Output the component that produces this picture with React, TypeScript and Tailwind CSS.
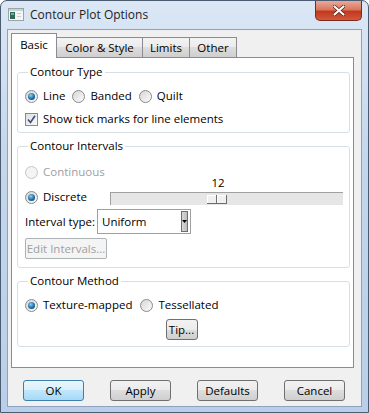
import React from 'react';

const ui = "font-['Open_Sans',sans-serif] text-[11.5px] leading-[16px] text-black";

function Radio({ checked, disabled }: { checked?: boolean; disabled?: boolean }) {
    return (
        <span
            className={`w-[13px] h-[13px] rounded-full border flex items-center justify-center shrink-0 ${disabled ? 'border-[#c5c5c5] bg-[#f4f4f4]' : 'border-[#8a8a8a] bg-gradient-to-br from-[#d6d6d6] to-[#fcfcfc]'}`}
        >
            {checked && (
                <span className="w-[7px] h-[7px] rounded-full bg-[radial-gradient(circle_at_40%_35%,#8fd0f2,#1d6da6_55%,#0c3a5e)]" />
            )}
        </span>
    );
}

function Check() {
    return (
        <span className="w-[13px] h-[13px] border border-[#8a8a8a] bg-gradient-to-br from-[#dedede] to-[#fbfbfb] flex items-center justify-center shrink-0">
            <svg width="9" height="9" viewBox="0 0 9 9">
                <path d="M1 4.5 L3.5 7.5 L8 0.8" fill="none" stroke="#3c4e7c" strokeWidth="1.6" />
            </svg>
        </span>
    );
}

function Button({ label, primary, className = '' }: { label: string; primary?: boolean; className?: string }) {
    return (
        <div
            className={`h-[21px] rounded-[3px] border flex items-center justify-center ${primary ? 'border-[#3c7fb1] bg-[linear-gradient(#eaf6fd,#d9f0fc_50%,#bee6fd_50%,#a7d9f5)]' : 'border-[#707070] bg-[linear-gradient(#f2f2f2,#ebebeb_50%,#dddddd_50%,#cfcfcf)]'} ${className}`}
        >
            {label}
        </div>
    );
}

function Group({ title, className = '', children }: { title: string; className?: string; children: React.ReactNode }) {
    return (
        <fieldset className={`border border-[#d5dfe5] rounded-[3px] ml-[5px] mr-[3px] px-[7px] ${className}`}>
            <legend className="ml-[3px] px-[2px] leading-[16px]">{title}</legend>
            {children}
        </fieldset>
    );
}

export default function App() {
    return (
        <div className={`w-[369px] h-[413px] flex flex-col border border-[#4b5b70] rounded-t-[7px] overflow-hidden bg-[linear-gradient(#dbe7f5,#c3d6ec_40%,#b9cfe9)] ${ui}`}>
            {/* title bar */}
            <div className="h-[28px] flex items-start shrink-0">
                <div className="flex items-center h-[27px] pl-[7px] gap-[6px]">
                    <svg width="16" height="13" viewBox="0 0 16 13">
                        <rect x="0.5" y="0.5" width="15" height="12" fill="#f4f6f7" stroke="#9aa3a6" />
                        <rect x="1" y="1" width="14" height="2" fill="#c9d3d6" />
                        <rect x="2" y="4" width="5" height="7" fill="#2f6a58" />
                        <rect x="3" y="5" width="3" height="2" fill="#6fb09a" />
                        <rect x="9" y="5" width="4" height="1" fill="#c8cdd0" />
                        <rect x="9" y="8" width="4" height="1" fill="#c8cdd0" />
                    </svg>
                    <span className="text-[12px] text-[#1e1e1e]">Contour Plot Options</span>
                </div>
                <div className="ml-auto mr-[6px] w-[47px] h-[20px] rounded-b-[5px] border border-t-0 border-[#7d2a1f] bg-[linear-gradient(#e9a99c,#d9785f_45%,#c2391f_55%,#d0583c)] flex items-center justify-center">
                    <svg width="12" height="11" viewBox="0 0 12 11">
                        <path d="M1.5 1.5 L10.5 9.5 M10.5 1.5 L1.5 9.5" stroke="#5a1a10" strokeWidth="3.6" strokeLinecap="round" />
                        <path d="M1.5 1.5 L10.5 9.5 M10.5 1.5 L1.5 9.5" stroke="#ffffff" strokeWidth="2.2" strokeLinecap="round" />
                    </svg>
                </div>
            </div>

            {/* client */}
            <div className="mx-[6px] mb-[5px] flex-1 border border-[#8ea2bd] bg-[#f0f0f0] flex flex-col pl-[3px] pr-[6px] pt-[3px]">
                {/* tabs */}
                <div className="h-[24px] flex items-end relative z-10">
                    <div className="w-[46px] h-[25px] -mb-px bg-white border border-b-0 border-[#898c95] flex items-center justify-center pb-[2px]">Basic</div>
                    <div className="w-[87px] -ml-px h-[20px] border border-b-0 border-[#898c95] bg-[linear-gradient(#f3f3f3,#ebebeb_50%,#dddddd_50%,#cfcfcf)] flex items-center justify-center">Color &amp; Style</div>
                    <div className="w-[48px] -ml-px h-[20px] border border-b-0 border-[#898c95] bg-[linear-gradient(#f3f3f3,#ebebeb_50%,#dddddd_50%,#cfcfcf)] flex items-center justify-center">Limits</div>
                    <div className="w-[48px] -ml-px h-[20px] border border-b-0 border-[#898c95] bg-[linear-gradient(#f3f3f3,#ebebeb_50%,#dddddd_50%,#cfcfcf)] flex items-center justify-center">Other</div>
                </div>

                {/* tab page */}
                <div className="w-[343px] h-[311px] border border-[#898c95] bg-white flex flex-col pt-[6px]">
                    <Group title="Contour Type" className="pt-[6px] pb-[3px]">
                        <div className="h-[20px] flex items-center">
                            <Radio checked />
                            <span className="ml-[5px] mr-[7px]">Line</span>
                            <Radio />
                            <span className="ml-[5px] mr-[7px]">Banded</span>
                            <Radio />
                            <span className="ml-[5px]">Quilt</span>
                        </div>
                        <div className="h-[20px] mt-[3px] flex items-center">
                            <Check />
                            <span className="ml-[5px]">Show tick marks for line elements</span>
                        </div>
                    </Group>

                    <Group title="Contour Intervals" className="mt-[5px] pt-[8px] pb-[8px]">
                        <div className="h-[20px] flex items-center">
                            <Radio disabled />
                            <span className="ml-[5px] text-[#a0a0a0]">Continuous</span>
                        </div>
                        <div className="-mt-[5px] flex items-end">
                            <div className="h-[16px] flex items-center w-[85px]">
                                <Radio checked />
                                <span className="ml-[5px]">Discrete</span>
                            </div>
                            <div className="flex-1 flex flex-col mr-[-1px]">
                                <div className="h-[12px] leading-[12px] ml-[101px] w-[14px] text-center">12</div>
                                <div className="mt-[3px] h-[13px] bg-[#e6e6e6] border-t border-l border-[#a0a0a0] flex items-center">
                                    <div className="ml-[96px] flex mt-[1px]">
                                        <div className="w-[10px] h-[9px] bg-[#f0f0f0] border-r border-b border-[#6d6d6d] shadow-[inset_1px_1px_0_#ffffff]" />
                                        <div className="w-[10px] h-[9px] bg-[#f0f0f0] border-r border-b border-[#6d6d6d] shadow-[inset_1px_1px_0_#ffffff]" />
                                    </div>
                                </div>
                            </div>
                        </div>
                        <div className="mt-[4px] flex items-center h-[25px]">
                            <span className="w-[72px]">Interval type:</span>
                            <div className="w-[94px] h-[25px] border border-[#a0a0a0] bg-white flex items-center pl-[4px] pr-[2px]">
                                <span className="flex-1">Uniform</span>
                                <div className="w-[7px] h-[21px] border border-[#6e6e6e] bg-[linear-gradient(90deg,#d8d8d8,#bdbdbd)] flex items-center justify-center">
                                    <svg width="5" height="3" viewBox="0 0 5 3">
                                        <path d="M0 0 H5 L2.5 3 Z" fill="#000" />
                                    </svg>
                                </div>
                            </div>
                        </div>
                        <div className="mt-[4px] w-[82px] h-[21px] border border-[#adb2b5] rounded-[2px] bg-[#f4f4f4] text-[#a0a0a0] flex items-center justify-center">
                            Edit Intervals...
                        </div>
                    </Group>

                    <Group title="Contour Method" className="mt-[5px] pt-[6px] pb-[6px]">
                        <div className="h-[20px] flex items-center">
                            <Radio checked />
                            <span className="ml-[5px] mr-[8px]">Texture-mapped</span>
                            <Radio />
                            <span className="ml-[5px]">Tessellated</span>
                        </div>
                        <div className="mt-[4px] flex justify-center pr-[4px]">
                            <Button label="Tip..." className="w-[32px]" />
                        </div>
                    </Group>
                </div>

                {/* bottom buttons */}
                <div className="mt-[12px] flex justify-between pl-[12px] pr-[10px]">
                    <Button label="OK" primary className="w-[61px]" />
                    <Button label="Apply" className="w-[61px]" />
                    <Button label="Defaults" className="w-[61px]" />
                    <Button label="Cancel" className="w-[61px]" />
                </div>
            </div>
        </div>
    );
}
